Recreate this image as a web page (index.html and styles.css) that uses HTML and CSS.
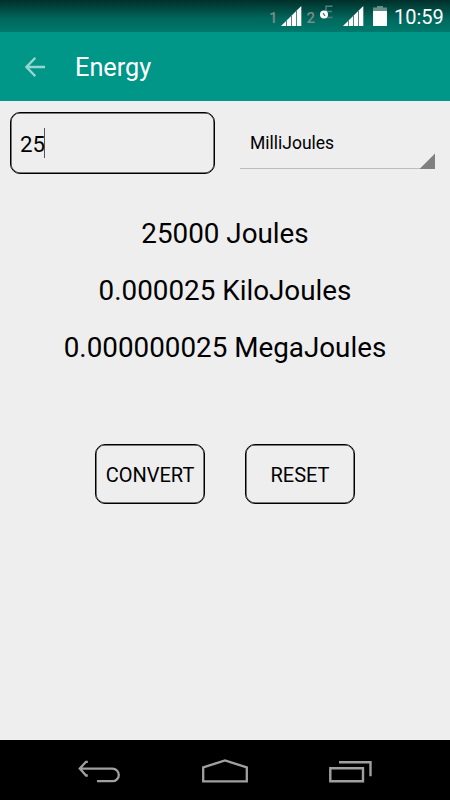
FILE: index.html
```html
<!DOCTYPE html>
<html lang="en">
<head>
  <meta charset="UTF-8" />
  <meta name="viewport" content="width=device-width, initial-scale=1.0"/>
  <title>Energy</title>
  <link rel="stylesheet" href="styles.css">
</head>
<body>
  <div class="screen">
    <div class="status-bar">
      <span class="sim">1</span>
      <svg class="signal" width="21" height="21" viewBox="0 0 21 21">
        <path d="M0 20 20.3 0V20Z" fill="#fff"/>
        <path d="M5.5 14V20M10.5 9V20M15.5 4V20" stroke="#4c8981" stroke-width="1"/>
      </svg>
      <span class="sim sim-two">2</span>
      <svg class="network" width="14" height="14" viewBox="0 0 14 14">
        <path d="M12.5 1.3H6V12.5H12.5M6 6.5H12" fill="none" stroke="#4c8279" stroke-width="1.5"/>
        <circle cx="4" cy="9.5" r="4" fill="#fff"/>
        <path d="M3 8.2 5 10.8" stroke="#477" stroke-width="1.3"/>
      </svg>
      <svg class="signal" width="21" height="21" viewBox="0 0 21 21">
        <path d="M0 20 20.3 0V20Z" fill="#fff"/>
        <path d="M5.5 14V20M10.5 9V20M15.5 4V20" stroke="#4c8981" stroke-width="1"/>
      </svg>
      <svg class="battery" width="14" height="20" viewBox="0 0 14 20">
        <path d="M4 0H10V1.5H14V5H0V1.5H4Z" fill="#669089"/>
        <path d="M0 5H14V20H0Z" fill="#fff"/>
      </svg>
      <span class="clock">10:59</span>
    </div>

    <header class="app-bar">
      <svg class="back" width="20" height="20" viewBox="0 0 20 20">
        <path d="M20 10H2M10.3 .9 1.4 10 10.3 19.1" fill="none" stroke="#99d5cf" stroke-width="2.3"/>
      </svg>
      <h1>Energy</h1>
    </header>

    <main>
      <div class="input-row">
        <div class="amount"><span>25</span><span class="cursor"></span></div>
        <div class="unit">
          <span>MilliJoules</span>
          <svg class="corner" width="15" height="16" viewBox="0 0 15 16">
            <path d="M15 .5V16H0V15.5Z" fill="#808080"/>
          </svg>
        </div>
      </div>

      <div class="results">
        <p>25000 Joules</p>
        <p>0.000025 KiloJoules</p>
        <p>0.000000025 MegaJoules</p>
      </div>

      <div class="buttons">
        <button type="button">CONVERT</button>
        <button type="button">RESET</button>
      </div>
    </main>

    <nav class="nav-bar">
      <svg width="44" height="26" viewBox="0 0 44 26">
        <path d="M2 9.6H34.5A6.1 6.1 0 0 1 34.5 22.2H19M9.8 2.8H8L1.8 9.6 8 16.5H9.8" fill="none" stroke="#a0a0a0" stroke-width="2.3"/>
      </svg>
      <svg width="48" height="26" viewBox="0 0 48 26">
        <path d="M2.2 22.3V8.3L24 1.5 45.8 8.3V22.3Z" fill="none" stroke="#a0a0a0" stroke-width="2.3"/>
      </svg>
      <svg width="44" height="26" viewBox="0 0 44 26">
        <path d="M2.3 9.3H35V22.3H2.3ZM11 3.3H42.5V17.3" fill="none" stroke="#a0a0a0" stroke-width="2.4"/>
      </svg>
    </nav>
  </div>
</body>
</html>
```

FILE: styles.css
```css
body {
  margin: 0;
  font-family: Roboto, sans-serif;
  background: #eee;
  color: #000;
}
.screen {
  display: flex;
  flex-direction: column;
  width: 450px;
  height: 800px;
  overflow: hidden;
}
.status-bar {
  display: flex;
  height: 32px;
  box-sizing: border-box;
  padding: 5px 8px 0 0;
  justify-content: flex-end;
  align-items: flex-start;
  background: linear-gradient(#002f2a, #00695d 60%, #00786c);
}
.sim {
  margin: 5px 4px 0 0;
  font-size: 15px;
  line-height: 16px;
  font-weight: 500;
  color: #7d8b89;
}
.signal {
  margin-top: 1px;
}
.sim-two {
  margin-left: 4px;
  margin-right: 5px;
}
.network {
  margin-right: 9px;
}
.battery {
  margin: 1px 7px 0 9px;
}
.clock {
  width: 48px;
  font-size: 20px;
  line-height: 24px;
  white-space: nowrap;
  color: #fff;
}
.app-bar {
  display: flex;
  align-items: center;
  height: 69px;
  padding: 0 25px;
  background: #009688;
}
.app-bar h1 {
  margin: 2px 0 0 30px;
  font-size: 25.3px;
  font-weight: 400;
  color: #fff;
}
.back {
  margin-top: 1px;
}
main {
  flex: 1;
}
.input-row {
  display: flex;
  gap: 25px;
  padding: 11px 15px 0 10px;
}
.amount {
  display: flex;
  align-items: center;
  box-sizing: border-box;
  width: 205px;
  height: 62px;
  padding: 2px 0 0 9px;
  border: 1px solid #000;
  border-radius: 10px;
  box-shadow: inset 0 0 0 .5px #000;
  font-size: 22.3px;
}
.cursor {
  width: 1px;
  height: 30px;
  margin: -2px 0 0 -1px;
  background: #555;
}
.unit {
  display: flex;
  flex: 1;
  justify-content: space-between;
  box-sizing: border-box;
  height: 57px;
  padding-left: 10px;
  border-bottom: 1px solid #bdbdbd;
  font-size: 17.5px;
  line-height: 62px;
}
.corner {
  align-self: flex-end;
  margin-bottom: -1px;
}
.results {
  padding-top: 31px;
  text-align: center;
}
.results p {
  margin: 0;
  font-size: 27.8px;
  line-height: 57px;
}
.buttons {
  display: flex;
  justify-content: center;
  gap: 40px;
  margin-top: 68px;
}
button {
  width: 110px;
  height: 60px;
  padding: 2px 0 0;
  border: 1px solid #000;
  border-radius: 10px;
  box-shadow: inset 0 0 0 .5px #000;
  background: transparent;
  color: #000;
  font-family: inherit;
  font-size: 20px;
}
.nav-bar {
  display: flex;
  justify-content: space-between;
  height: 60px;
  box-sizing: border-box;
  padding: 19px 78px 0 78px;
  background: #000;
}
```
